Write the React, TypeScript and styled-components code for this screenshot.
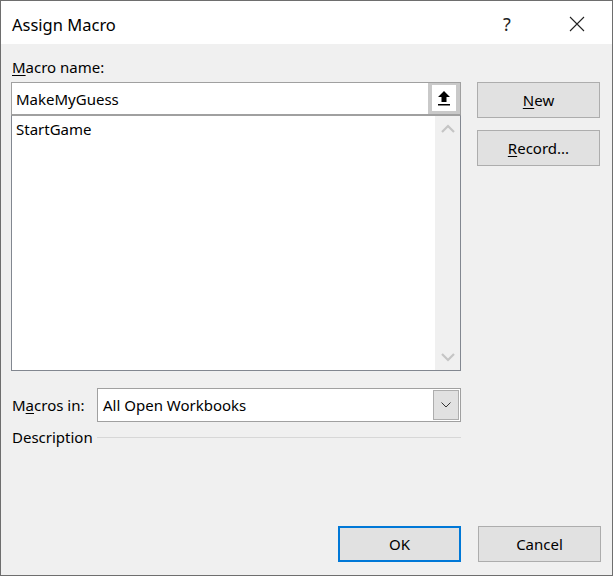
import React from "react";
import styled, { createGlobalStyle } from "styled-components";

const Global = createGlobalStyle`
  html, body { margin: 0; padding: 0; background: #f0f0f0; }
  * { box-sizing: border-box; }
  body { font-family: "Noto Sans", "Liberation Sans", sans-serif; color: #000; }
`;

const Window = styled.div`
  width: 613px;
  height: 576px;
  border: 1px solid #6e6e6e;
  background: #f0f0f0;
  display: flex;
  flex-direction: column;
`;

const TitleBar = styled.div`
  height: 43px;
  background: #fff;
  display: flex;
  align-items: center;
  padding-left: 11px;
  padding-top: 3px;
  flex: none;
`;

const Title = styled.div`
  font-size: 16.5px;
  flex: 1;
`;

const TitleButton = styled.div`
  width: 70px;
  height: 40px;
  display: flex;
  align-items: center;
  justify-content: center;
  font-size: 18px;
  color: #222;
`;

const Body = styled.div`
  flex: 1;
  display: flex;
  flex-direction: column;
  padding: 13px 11px 13px 10px;
`;

const Main = styled.div`
  display: flex;
  gap: 16px;
`;

const LeftCol = styled.div`
  width: 450px;
  display: flex;
  flex-direction: column;
`;

const RightCol = styled.div`
  width: 123px;
  display: flex;
  flex-direction: column;
  gap: 12px;
  padding-top: 25px;
`;

const Label = styled.div`
  font-size: 15px;
  height: 20px;
  line-height: 20px;
  padding-left: 1px;
  margin-bottom: 5px;
`;

const U = styled.span`
  text-decoration: underline;
  text-underline-offset: 2px;
`;

const NameBox = styled.div`
  height: 33px;
  border: 1px solid #a0a0a0;
  background: #fff;
  display: flex;
  align-items: stretch;
`;

const NameText = styled.div`
  flex: 1;
  font-size: 15px;
  display: flex;
  align-items: center;
  padding-left: 4px;
`;

const CollapseBtn = styled.div`
  width: 32px;
  background: #fff;
  border: 4px solid #c9c9c9;
  border-top-width: 2px;
  border-bottom-width: 3px;
  display: flex;
  align-items: center;
  justify-content: center;
`;

const ListBox = styled.div`
  height: 256px;
  border: 1px solid #828790;
  border-top-color: #a0a0a0;
  background: #fff;
  display: flex;
`;

const Items = styled.div`
  flex: 1;
  padding: 2px 4px;
`;

const Item = styled.div`
  font-size: 15px;
  height: 22px;
  line-height: 22px;
`;

const ScrollBar = styled.div`
  width: 25px;
  background: #f0f0f0;
  display: flex;
  flex-direction: column;
  justify-content: space-between;
  align-items: center;
  padding: 8px 0 8px;
`;

const Row = styled.div`
  display: flex;
  align-items: center;
  margin-top: 17px;
  height: 34px;
`;

const RowLabel = styled.div`
  font-size: 15px;
  width: 86px;
  padding-left: 1px;
`;

const Select = styled.div`
  flex: 1;
  height: 34px;
  border: 1px solid #a0a0a0;
  background: #fff;
  display: flex;
  align-items: center;
  padding: 1px;
`;

const SelectText = styled.div`
  flex: 1;
  font-size: 15px;
  padding-left: 4px;
`;

const DropBtn = styled.div`
  width: 26px;
  height: 30px;
  background: #e1e1e1;
  border: 1px solid #adadad;
  display: flex;
  align-items: center;
  justify-content: center;
`;

const DescRow = styled.div`
  display: flex;
  align-items: center;
  gap: 4px;
  margin-top: 5px;
`;

const DescLabel = styled.div`
  font-size: 15px;
  padding-left: 1px;
`;

const Rule = styled.div`
  flex: 1;
  height: 1px;
  background: #d7d7d7;
`;

const Button = styled.div<{ $default?: boolean }>`
  width: 123px;
  height: 36px;
  background: #e1e1e1;
  border: ${(p) => (p.$default ? "2px solid #0078d7" : "1px solid #adadad")};
  display: flex;
  align-items: center;
  justify-content: center;
  font-size: 15px;
`;

const Footer = styled.div`
  margin-top: auto;
  display: flex;
  justify-content: flex-end;
  gap: 17px;
`;

const Chevron = ({ up }: { up?: boolean }) => (
  <svg width="14" height="9" viewBox="0 0 14 9">
    <path
      d={up ? "M1 8 L7 2 L13 8" : "M1 1 L7 7 L13 1"}
      fill="none"
      stroke="#c5c5c5"
      strokeWidth="2.2"
    />
  </svg>
);

export default function App() {
  return (
    <>
      <Global />
      <Window>
        <TitleBar>
          <Title>Assign Macro</Title>
          <TitleButton>?</TitleButton>
          <TitleButton>
            <svg width="16" height="16" viewBox="0 0 16 16">
              <path d="M1 1 L15 15 M15 1 L1 15" stroke="#222" strokeWidth="1.1" />
            </svg>
          </TitleButton>
        </TitleBar>
        <Body>
          <Main>
            <LeftCol>
              <Label>
                <U>M</U>acro name:
              </Label>
              <NameBox>
                <NameText>MakeMyGuess</NameText>
                <CollapseBtn>
                  <svg width="14" height="16" viewBox="0 0 14 16">
                    <path d="M7 1 L13 7 L9.5 7 L9.5 12 L4.5 12 L4.5 7 L1 7 Z" fill="#000" />
                    <rect x="1" y="14" width="12" height="1.5" fill="#000" />
                  </svg>
                </CollapseBtn>
              </NameBox>
              <ListBox>
                <Items>
                  <Item>StartGame</Item>
                </Items>
                <ScrollBar>
                  <Chevron up />
                  <Chevron />
                </ScrollBar>
              </ListBox>
              <Row>
                <RowLabel>
                  M<U>a</U>cros in:
                </RowLabel>
                <Select>
                  <SelectText>All Open Workbooks</SelectText>
                  <DropBtn>
                    <svg width="10" height="6" viewBox="0 0 10 6">
                      <path d="M0.5 0.5 L5 5 L9.5 0.5" fill="none" stroke="#333" strokeWidth="1" />
                    </svg>
                  </DropBtn>
                </Select>
              </Row>
              <DescRow>
                <DescLabel>Description</DescLabel>
                <Rule />
              </DescRow>
            </LeftCol>
            <RightCol>
              <Button>
                <span>
                  <U>N</U>ew
                </span>
              </Button>
              <Button>
                <span>
                  <U>R</U>ecord...
                </span>
              </Button>
            </RightCol>
          </Main>
          <Footer>
            <Button $default>OK</Button>
            <Button>Cancel</Button>
          </Footer>
        </Body>
      </Window>
    </>
  );
}
